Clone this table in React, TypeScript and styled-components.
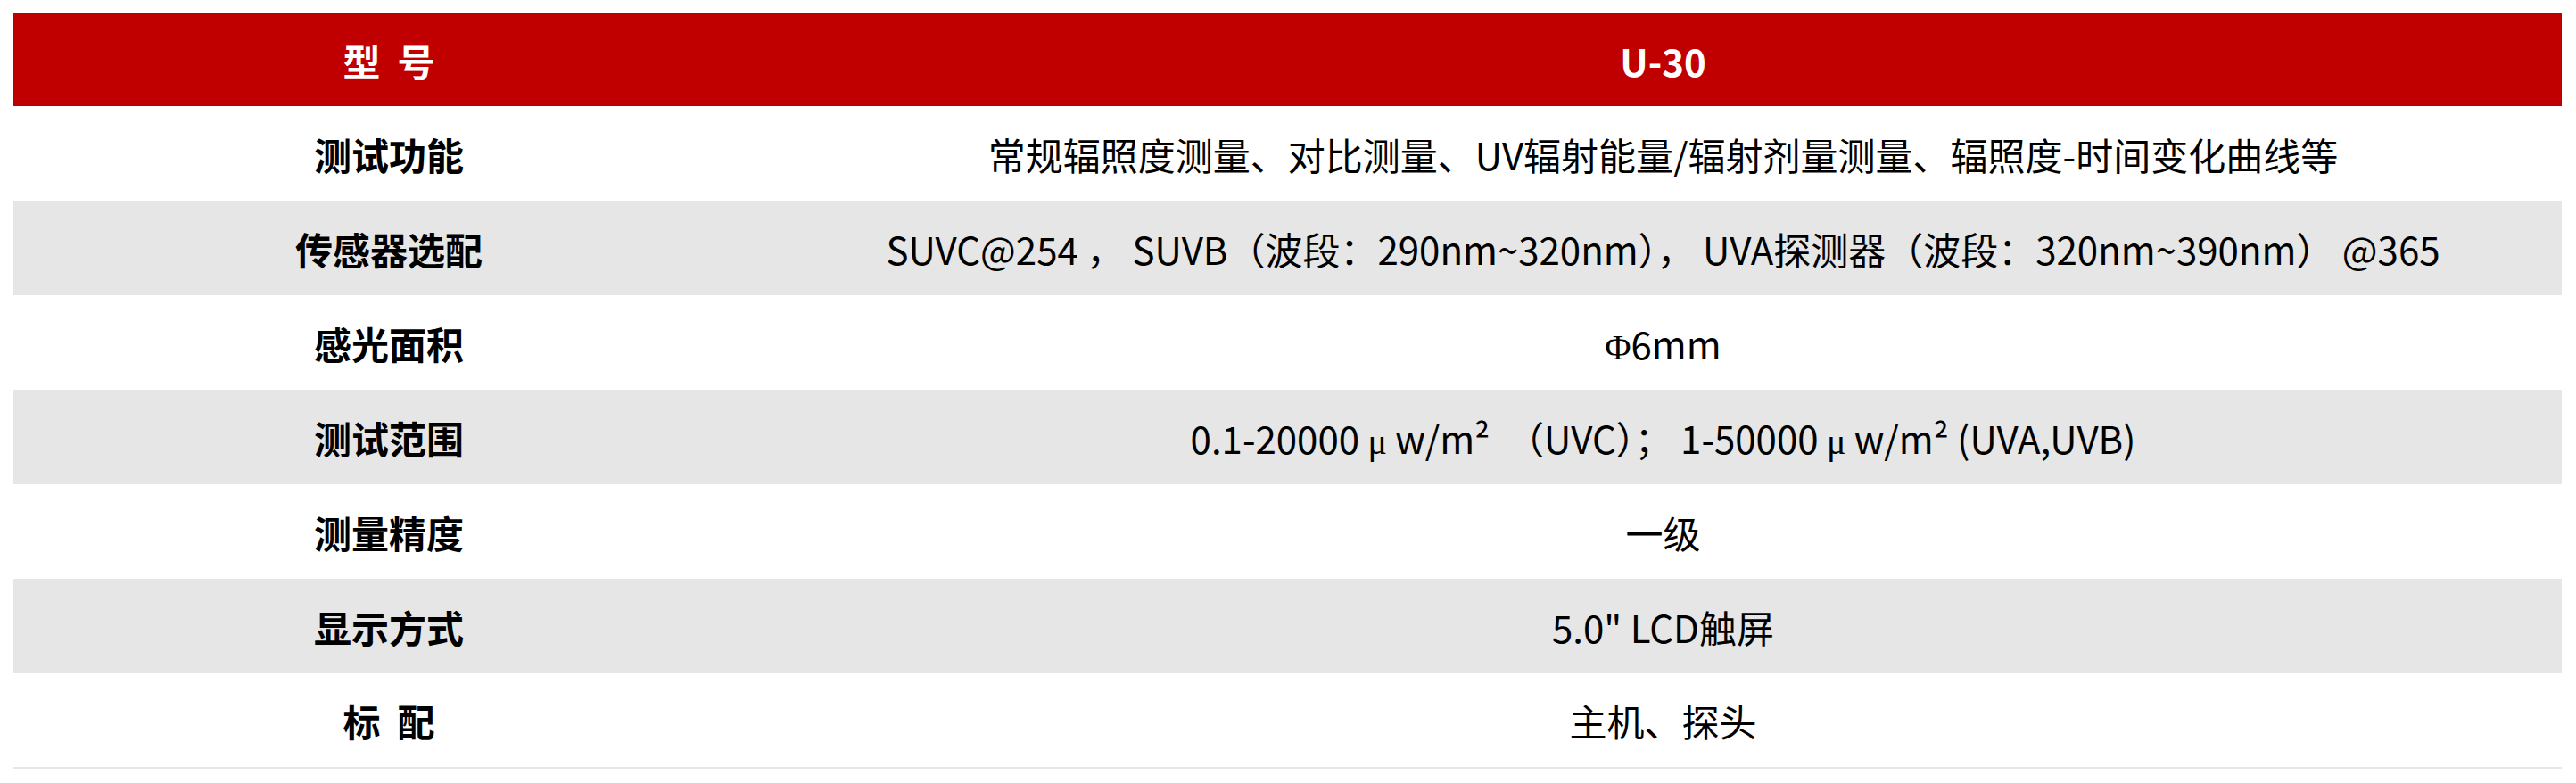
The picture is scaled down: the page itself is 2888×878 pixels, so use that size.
import React from 'react';
import styled, { createGlobalStyle } from 'styled-components';

const GlobalStyle = createGlobalStyle`
    html, body {
        margin: 0;
        padding: 0;
        background: #fff;
    }
    body {
        font-family: 'Noto Sans CJK SC', 'Noto Sans', sans-serif;
        color: #000;
    }
`;

const Page = styled.div`
    padding: 15px 16px 15px 15px;
`;

const SpecTable = styled.table`
    width: 100%;
    border-collapse: collapse;
    table-layout: fixed;
    border-bottom: 2px solid #e6e6e6;
`;

const HeadRow = styled.tr`
    background: #c00000;
    height: 104px;
    th {
        color: #fff;
        font-size: 42px;
        font-weight: 700;
        text-align: center;
        padding: 0;
        white-space: pre;
    }
`;

const Row = styled.tr<{ $shade?: boolean }>`
    background: ${(p) => (p.$shade ? '#e6e6e6' : '#fff')};
    height: 106px;
`;

const Label = styled.td`
    padding: 0;
    text-align: center;
    font-size: 42px;
    font-weight: 700;
    white-space: pre;
`;

const Value = styled.td`
    padding: 0;
    text-align: center;
    font-size: 42px;
    font-weight: 400;
    white-space: pre;
`;

const Serif = styled.span`
    font-family: 'Liberation Serif', 'DejaVu Serif', serif;
    font-size: 40px;
`;

const specs: { label: string; value: React.ReactNode }[] = [
    { label: '测试功能', value: '常规辐照度测量、对比测量、UV辐射能量/辐射剂量测量、辐照度-时间变化曲线等' },
    {
        label: '传感器选配',
        value: 'SUVC@254 ， SUVB（波段：290nm~320nm）， UVA探测器（波段：320nm~390nm） @365',
    },
    {
        label: '感光面积',
        value: (
            <>
                <Serif>Φ</Serif>6mm
            </>
        ),
    },
    {
        label: '测试范围',
        value: (
            <>
                0.1-20000 <Serif>μ</Serif> w/m²  （UVC）； 1-50000 <Serif>μ</Serif> w/m² (UVA,UVB)
            </>
        ),
    },
    { label: '测量精度', value: '一级' },
    { label: '显示方式', value: '5.0" LCD触屏' },
    { label: '标  配', value: '主机、探头' },
];

export default function App() {
    return (
        <>
            <GlobalStyle />
            <Page>
                <SpecTable>
                    <colgroup>
                        <col style={{ width: 842 }} />
                        <col />
                    </colgroup>
                    <thead>
                        <HeadRow>
                            <th>型  号</th>
                            <th>U-30</th>
                        </HeadRow>
                    </thead>
                    <tbody>
                        {specs.map((s, i) => (
                            <Row key={s.label} $shade={i % 2 === 1}>
                                <Label>{s.label}</Label>
                                <Value>{s.value}</Value>
                            </Row>
                        ))}
                    </tbody>
                </SpecTable>
            </Page>
        </>
    );
}
